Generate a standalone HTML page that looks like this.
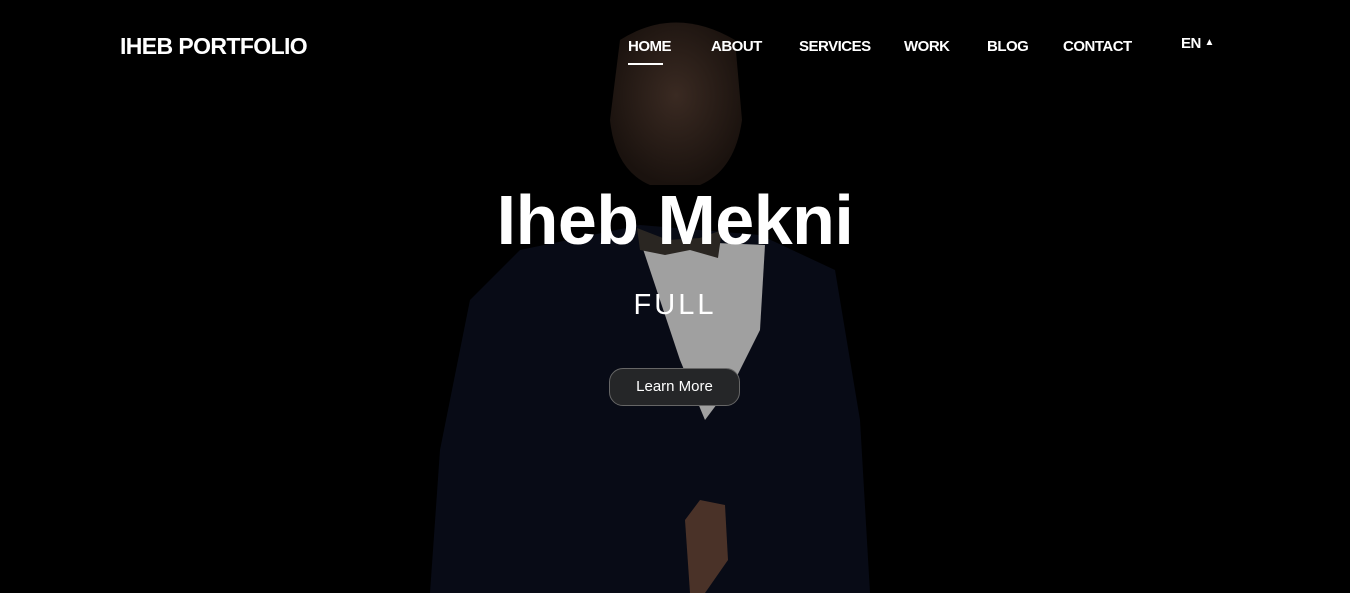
<!DOCTYPE html>
<html><head><meta charset="utf-8"><style>
html,body{margin:0;padding:0;width:1350px;height:593px;overflow:hidden;background:#000;font-family:"Segoe UI","Liberation Sans",sans-serif;color:#fff}
.logo{position:absolute;left:120px;top:33px;font-size:23px;font-weight:700;letter-spacing:-0.6px}
.nav a{position:absolute;top:38px;font-size:15px;font-weight:700;color:#fff;text-decoration:none;letter-spacing:-0.5px}
.ul{position:absolute;left:628px;top:63px;width:35px;height:2px;background:#fff}
h1{position:absolute;left:0;width:1350px;text-align:center;top:180px;margin:0;font-size:70px;font-weight:600;letter-spacing:-0.5px}
.sub{position:absolute;left:0;width:1350px;text-align:center;top:289px;font-size:29px;font-weight:300;letter-spacing:3px}
.btn{position:absolute;left:609px;top:368px;width:131px;height:38px;border:1px solid #666;border-radius:14px;background:#252628;box-sizing:border-box;font-size:15px;text-align:center;line-height:36px}
</style></head><body>
<svg width="1350" height="593" style="position:absolute;left:0;top:0">
<defs><radialGradient id="f" cx="50%" cy="45%" r="55%"><stop offset="0" stop-color="#3a2a22"/><stop offset="1" stop-color="#1a120e"/></radialGradient></defs>
<path d="M620 40 Q675 5 735 40 L742 120 Q735 170 700 185 L650 185 Q615 170 610 120 Z" fill="url(#f)"/>
<path d="M520 250 L640 225 L760 235 L835 270 L860 420 L870 593 L430 593 L440 450 L470 300 Z" fill="#080b16"/>
<path d="M640 240 L765 245 L760 330 L735 380 L705 420 L680 360 Z" fill="#a0a0a0"/>
<path d="M637 228 L668 240 L700 238 L722 230 L718 258 L690 250 L665 255 L640 250 Z" fill="#2a2622"/>
<path d="M700 500 L725 505 L728 560 L705 593 L690 593 L685 520 Z" fill="#4a3228"/>
</svg>
<div class="logo">IHEB PORTFOLIO</div>
<div class="nav">
<a style="left:628px">HOME</a>
<a style="left:711px">ABOUT</a>
<a style="left:799px">SERVICES</a>
<a style="left:904px">WORK</a>
<a style="left:987px">BLOG</a>
<a style="left:1063px">CONTACT</a>
<a style="left:1181px;top:35px">EN <span style="font-size:10px;vertical-align:3px">&#9650;</span></a>
</div>
<div class="ul"></div>
<h1>Iheb Mekni</h1>
<div class="sub">FULL</div>
<div class="btn">Learn More</div>
</body></html>
